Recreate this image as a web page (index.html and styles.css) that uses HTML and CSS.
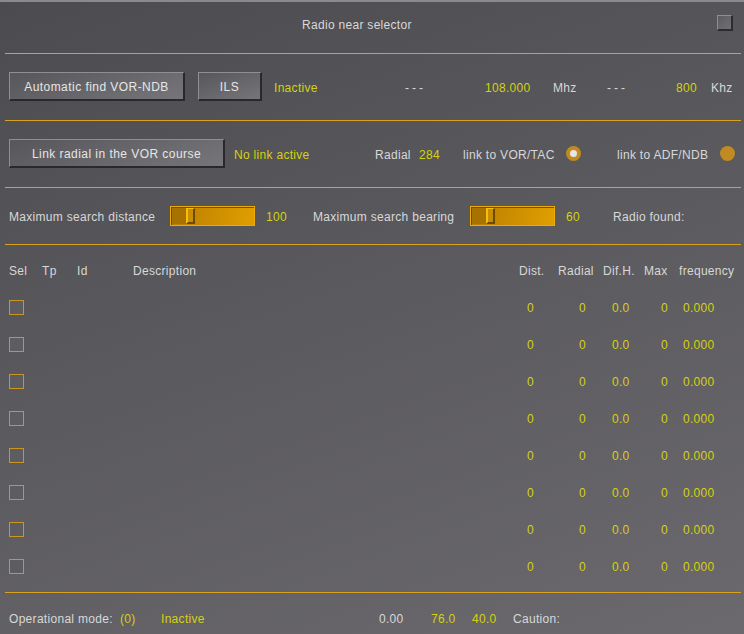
FILE: index.html
```html
<!DOCTYPE html>
<html>
<head>
<meta charset="utf-8">
<title>Radio near selector</title>
<link rel="stylesheet" href="styles.css">
</head>
<body>
<div class="panel">
  <div class="header">
    <span class="title">Radio near selector</span>
    <span class="bevel-box"></span>
  </div>
  <div class="hr"></div>

  <div class="row row-btn">
    <button class="btn w176">Automatic find VOR-NDB</button>
    <button class="btn w64 ml13">ILS</button>
    <span class="y w131 ml12">Inactive</span>
    <span class="dash w80">---</span>
    <span class="y w68">108.000</span>
    <span class="w54">Mhz</span>
    <span class="dash w60">---</span>
    <span class="y w30 r">800</span>
    <span class="ml14">Khz</span>
  </div>
  <div class="hr"></div>

  <div class="row row-btn">
    <button class="btn w216">Link radial in the VOR course</button>
    <span class="y w141 ml9">No link active</span>
    <span class="w44">Radial</span>
    <span class="y w44">284</span>
    <span class="w103">link to VOR/TAC</span>
    <span class="radio on"></span>
    <span class="w103 ml36">link to ADF/NDB</span>
    <span class="radio"></span>
  </div>
  <div class="hr"></div>

  <div class="row row-slider">
    <span class="w161">Maximum search distance</span>
    <span class="slider"><span class="track-left"></span><span class="thumb"></span></span>
    <span class="y w47 ml11">100</span>
    <span class="w157">Maximum search bearing</span>
    <span class="slider"><span class="track-left"></span><span class="thumb"></span></span>
    <span class="y w47 ml11">60</span>
    <span>Radio found:</span>
  </div>
  <div class="hr"></div>

  <div class="table">
    <span>Sel</span><span>Tp</span><span>Id</span><span>Description</span>
    <span>Dist.</span><span>Radial</span><span>Dif.H.</span><span>Max</span><span>frequency</span>

    <span><i class="chk"></i></span><span></span><span></span><span></span>
    <span class="y c-d">0</span><span class="y c-r">0</span><span class="y c-h">0.0</span><span class="y c-m">0</span><span class="y c-f">0.000</span>

    <span><i class="chk"></i></span><span></span><span></span><span></span>
    <span class="y c-d">0</span><span class="y c-r">0</span><span class="y c-h">0.0</span><span class="y c-m">0</span><span class="y c-f">0.000</span>

    <span><i class="chk"></i></span><span></span><span></span><span></span>
    <span class="y c-d">0</span><span class="y c-r">0</span><span class="y c-h">0.0</span><span class="y c-m">0</span><span class="y c-f">0.000</span>

    <span><i class="chk"></i></span><span></span><span></span><span></span>
    <span class="y c-d">0</span><span class="y c-r">0</span><span class="y c-h">0.0</span><span class="y c-m">0</span><span class="y c-f">0.000</span>

    <span><i class="chk"></i></span><span></span><span></span><span></span>
    <span class="y c-d">0</span><span class="y c-r">0</span><span class="y c-h">0.0</span><span class="y c-m">0</span><span class="y c-f">0.000</span>

    <span><i class="chk"></i></span><span></span><span></span><span></span>
    <span class="y c-d">0</span><span class="y c-r">0</span><span class="y c-h">0.0</span><span class="y c-m">0</span><span class="y c-f">0.000</span>

    <span><i class="chk"></i></span><span></span><span></span><span></span>
    <span class="y c-d">0</span><span class="y c-r">0</span><span class="y c-h">0.0</span><span class="y c-m">0</span><span class="y c-f">0.000</span>

    <span><i class="chk"></i></span><span></span><span></span><span></span>
    <span class="y c-d">0</span><span class="y c-r">0</span><span class="y c-h">0.0</span><span class="y c-m">0</span><span class="y c-f">0.000</span>
  </div>
  <div class="hr"></div>

  <div class="row footer">
    <span class="w111">Operational mode:</span>
    <span class="y w41">(0)</span>
    <span class="y w218">Inactive</span>
    <span class="w52">0.00</span>
    <span class="y w41">76.0</span>
    <span class="y w41">40.0</span>
    <span>Caution:</span>
  </div>
</div>
</body>
</html>
```

FILE: styles.css
```css
html, body {
  margin: 0;
  padding: 0;
}
body {
  width: 744px;
  height: 634px;
  overflow: hidden;
  border-top: 2px solid #8a898d;
  box-sizing: border-box;
  background: linear-gradient(160deg, #4c4b4f 0%, #5a595d 45%, #6b696e 100%);
  font-family: "Liberation Sans", Arial, sans-serif;
  font-size: 12px;
  letter-spacing: 0.3px;
  color: #d8d8d8;
}
.panel {
  padding: 0 3px 0 5px;
}
.header {
  height: 51px;
  box-sizing: border-box;
  padding-top: 13px;
  display: flex;
  align-items: flex-start;
}
.title {
  line-height: 16px;
  padding-top: 2px;
  margin-left: 297px;
  width: 415px;
}
.bevel-box {
  width: 16px;
  height: 16px;
  box-sizing: border-box;
  border-top: 1px solid #8e8d92;
  border-left: 1px solid #8e8d92;
  border-right: 2px solid #2c2b2f;
  border-bottom: 2px solid #2c2b2f;
  background: linear-gradient(135deg, #5c5b60, #707075);
}
.hr {
  height: 1px;
  background: #d9a11e;
}
.row {
  display: flex;
  align-items: center;
  padding-left: 4px;
  white-space: nowrap;
}
.row span {
  flex: none;
  line-height: 14px;
}
.row span:not(.radio):not(.slider):not(.track-left):not(.thumb) {
  padding-top: 2px;
}
.dash {
  letter-spacing: 3px;
}
.row-btn {
  height: 66px;
  box-sizing: border-box;
  padding-top: 18px;
  padding-bottom: 19px;
}
.row-slider {
  height: 56px;
}
.footer {
  height: 41px;
  box-sizing: border-box;
  padding-top: 8px;
}
.btn {
  height: 29px;
  box-sizing: border-box;
  padding: 2px 0 0;
  border-top: 1px solid #8f8e93;
  border-left: 1px solid #8f8e93;
  border-right: 2px solid #29282c;
  border-bottom: 2px solid #29282c;
  background: linear-gradient(160deg, #57565b, #76757a);
  color: #e6e6e6;
  font-family: "Liberation Sans", Arial, sans-serif;
  font-size: 12px;
  letter-spacing: 0.45px;
  flex: none;
}
.y { color: #d4d20e; }
.r { text-align: right; }

.w30 { width: 30px; }
.w41 { width: 41px; }
.w44 { width: 44px; }
.w47 { width: 47px; }
.w52 { width: 52px; }
.w54 { width: 54px; }
.w60 { width: 60px; }
.w64 { width: 64px; }
.w68 { width: 68px; }
.w80 { width: 80px; }
.w103 { width: 103px; }
.w111 { width: 111px; }
.w131 { width: 131px; }
.w141 { width: 141px; }
.w157 { width: 157px; }
.w161 { width: 161px; }
.w176 { width: 176px; }
.w216 { width: 216px; }
.w218 { width: 218px; }
.ml9 { margin-left: 9px; }
.ml11 { margin-left: 11px; }
.ml12 { margin-left: 12px; }
.ml13 { margin-left: 13px; }
.ml14 { margin-left: 14px; }
.ml36 { margin-left: 36px; }

.radio {
  width: 15px;
  height: 15px;
  border-radius: 50%;
  background: #c18b22;
  display: flex;
  align-items: center;
  justify-content: center;
}
.radio.on::after {
  content: "";
  width: 7px;
  height: 7px;
  border-radius: 50%;
  background: #e6e6e8;
}

.slider {
  width: 85px;
  height: 20px;
  box-sizing: border-box;
  border: 1px solid #eeab00;
  box-shadow: inset 1px 1px 0 #6e5000;
  background: linear-gradient(100deg, #b87c00, #e09f00);
  display: flex;
  align-items: stretch;
  padding: 1px 0 1px 1px;
}
.slider .track-left {
  width: 14px;
  background: #a87200;
}
.slider .thumb {
  width: 9px;
  box-sizing: border-box;
  border-top: 1px solid #f4be10;
  border-left: 2px solid #f4be10;
  border-right: 2px solid #6a4a00;
  border-bottom: 2px solid #6a4a00;
  background: #c98e00;
}

.table {
  display: grid;
  grid-template-columns: 33px 35px 56px 386px 39px 45px 41px 35px 62px;
  grid-auto-rows: 37px;
  align-items: center;
  padding: 7px 0 7px 4px;
  white-space: nowrap;
}
.table span {
  line-height: 14px;
}
.chk {
  display: block;
  width: 15px;
  height: 15px;
  box-sizing: border-box;
  border: 1px solid #c99524;
  background: #5d5c61;
}
.c-d { padding-left: 8px; }
.c-r { padding-left: 21px; }
.c-h { padding-left: 9px; }
.c-m { padding-left: 17px; }
.c-f { padding-left: 4px; }
```
